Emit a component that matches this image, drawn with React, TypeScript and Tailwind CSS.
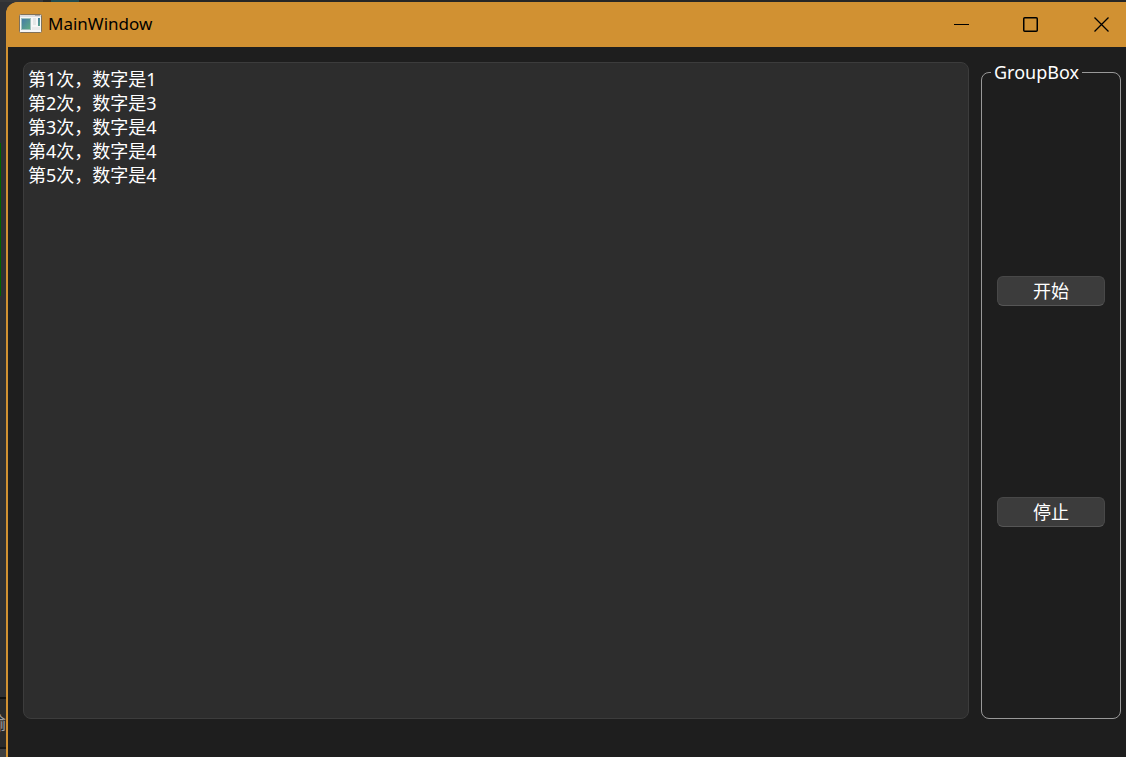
import React, { useState } from "react";

/* ── AppIcon ── */
function AppIcon() {
  return (
    <svg width="24" height="20" viewBox="0 0 24 20" className="shrink-0" aria-hidden="true">
      <defs>
        <linearGradient id="pane" x1="0" y1="0" x2="1" y2="1">
          <stop offset="0" stopColor="#4478a8" />
          <stop offset="1" stopColor="#5fae82" />
        </linearGradient>
      </defs>
      <rect x="0.5" y="0.5" width="22" height="18" rx="1" fill="#f6f6f6" stroke="#80715a" />
      <rect x="1" y="1" width="21" height="2" fill="#dcdde0" />
      <rect x="16" y="1" width="5" height="1" fill="#a9a9ad" />
      <rect x="2.5" y="4.5" width="9" height="11" fill="url(#pane)" stroke="#9fc0bd" />
      <rect x="14" y="4" width="3" height="7" fill="#e4e6e6" />
      <rect x="19" y="4" width="2" height="8" fill="url(#pane)" />
      <rect x="13" y="13" width="8" height="3" fill="#e9eaea" />
    </svg>
  );
}

/* ── TitleBar ── */
interface TitleBarProps {
  /** Window caption */
  title: string;
}

function TitleBar({ title }: TitleBarProps) {
  return (
    <header className="flex h-11 shrink-0 items-center bg-[#d19132] pl-[13px] text-black">
      <AppIcon />
      <h1 className="flex-1 pl-[5px] font-['Noto_Sans','Noto_Sans_CJK_SC',sans-serif] text-[17px] leading-6">
        {title}
      </h1>
      <div className="flex h-full shrink-0">
        <button type="button" aria-label="Minimize" className="flex w-[70px] items-center justify-center">
          <svg width="16" height="16" viewBox="0 0 16 16" aria-hidden="true">
            <path d="M1 8.5h15" stroke="currentColor" />
          </svg>
        </button>
        <button type="button" aria-label="Maximize" className="flex w-[70px] items-center justify-center">
          <svg width="16" height="16" viewBox="0 0 16 16" fill="none" aria-hidden="true">
            <rect x="0.75" y="1.75" width="13.5" height="13.5" rx="1" stroke="currentColor" strokeWidth="1.5" />
          </svg>
        </button>
        <button type="button" aria-label="Close" className="flex w-[60px] items-center justify-center pl-3">
          <svg width="16" height="16" viewBox="0 0 16 16" fill="none" aria-hidden="true">
            <path d="M0.5 1.5l14 14M14.5 1.5l-14 14" stroke="currentColor" strokeWidth="1.3" />
          </svg>
        </button>
      </div>
    </header>
  );
}

/* ── PushButton ── */
interface PushButtonProps {
  children: React.ReactNode;
  onClick?: () => void;
}

function PushButton({ children, onClick }: PushButtonProps) {
  return (
    <button
      type="button"
      className="h-[30px] w-full rounded-md border border-[#484848] border-b-[#565656] bg-[#3c3c3c] text-lg leading-6 text-white hover:bg-[#444444]"
      onClick={onClick}
    >
      {children}
    </button>
  );
}

/* ── DesktopEdge ── the strip of the editor that shows behind the window */
function DesktopEdge() {
  return (
    <div className="flex w-1.5 shrink-0 flex-col overflow-hidden bg-[#303134]" aria-hidden="true">
      <div className="h-[141px]" />
      <div className="h-[153px] w-px bg-[#006400]" />
      <div className="flex-1" />
      <div className="h-0.5 bg-[#101010]" />
      <div className="flex h-12 items-center justify-end bg-[#2b2b2b]">
        <span className="shrink-0 text-lg leading-6 text-[#a0a0a0]">输</span>
      </div>
      <div className="h-0.5 bg-[#181818]" />
      <div className="h-2 bg-[#404040]" />
    </div>
  );
}

const initialLog = [
  "第1次，数字是1",
  "第2次，数字是3",
  "第3次，数字是4",
  "第4次，数字是4",
  "第5次，数字是4",
];

export default function App() {
  const [log, setLog] = useState(initialLog.join("\n"));

  return (
    <div className="flex h-screen flex-col bg-[#303134] font-['Noto_Sans','Noto_Sans_CJK_SC',sans-serif]">
      {/* Top edge */}
      <div className="flex h-0.5 shrink-0 bg-[#262626]">
        <div className="w-[43px] bg-[#37383a]" />
        <div className="ml-2 w-7 bg-[#214b50]" />
      </div>

      <div className="flex min-h-0 flex-1">
        <DesktopEdge />

        {/* Window */}
        <div className="flex min-w-0 flex-1 flex-col overflow-hidden rounded-tl-xl bg-[#d19132]">
          <TitleBar title="MainWindow" />
          <main className="mt-px ml-0.5 flex min-h-0 flex-1 gap-3 bg-[#1e1e1e] pt-[15px] pr-[5px] pb-[38px] pl-[15px]">
            <textarea
              aria-label="Log"
              className="min-w-0 flex-1 resize-none rounded-lg border border-[#3c3c3c] bg-[#2d2d2d] px-1 py-1 text-lg leading-6 text-white outline-none"
              value={log}
              onChange={(e) => setLog(e.target.value)}
            />
            <fieldset className="flex w-[140px] shrink-0 flex-col justify-evenly rounded-lg border border-[#999999] px-[15px] pt-0.5">
              <legend className="-ml-1.5 px-[3px] text-lg leading-[21px] text-white">GroupBox</legend>
              <PushButton>开始</PushButton>
              <PushButton>停止</PushButton>
            </fieldset>
          </main>
        </div>
      </div>
    </div>
  );
}
